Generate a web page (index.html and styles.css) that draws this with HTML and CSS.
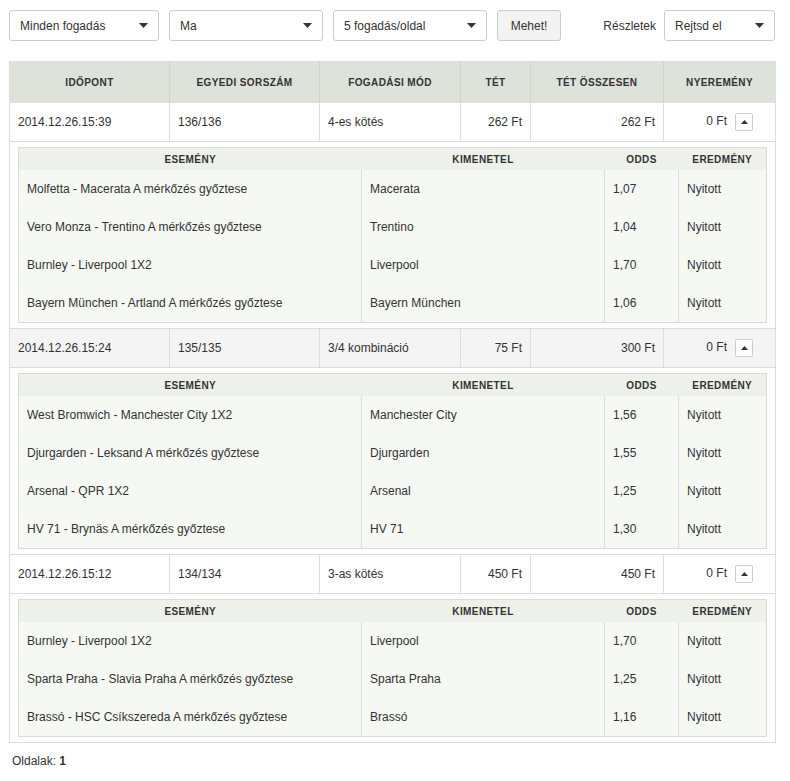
FILE: index.html
```html
<!DOCTYPE html>
<html lang="hu">
<head>
    <meta charset="UTF-8">
    <title>Fogadásaim</title>
    <link rel="stylesheet" href="styles.css">
</head>
<body>
    <div class="page">
        <!-- szűrők -->
        <div class="toolbar">
            <div class="select w150">Minden fogadás<svg class="caret" width="9" height="5" viewBox="0 0 9 5"><path d="M0 0h9L4.5 5z"/></svg></div>
            <div class="select w154">Ma<svg class="caret" width="9" height="5" viewBox="0 0 9 5"><path d="M0 0h9L4.5 5z"/></svg></div>
            <div class="select w154">5 fogadás/oldal<svg class="caret" width="9" height="5" viewBox="0 0 9 5"><path d="M0 0h9L4.5 5z"/></svg></div>
            <button class="btn">Mehet!</button>
            <span class="label">Részletek</span>
            <div class="select w111">Rejtsd el<svg class="caret" width="9" height="5" viewBox="0 0 9 5"><path d="M0 0h9L4.5 5z"/></svg></div>
        </div>

        <table class="bets">
            <colgroup>
                <col style="width:160px"><col style="width:150px"><col style="width:141px">
                <col style="width:70px"><col style="width:133px"><col style="width:112px">
            </colgroup>
            <thead>
                <tr>
                    <th>Időpont</th><th>Egyedi sorszám</th><th>Fogadási mód</th>
                    <th>Tét</th><th>Tét összesen</th><th>Nyeremény</th>
                </tr>
            </thead>
            <tbody>
                <tr class="bet">
                    <td>2014.12.26.15:39</td><td>136/136</td><td>4-es kötés</td>
                    <td class="num">262 Ft</td><td class="num">262 Ft</td>
                    <td class="num win">0 Ft<span class="toggle"><svg width="7" height="4" viewBox="0 0 7 4"><path d="M0 4h7L3.5 0z"/></svg></span></td>
                </tr>
                <tr class="details">
                    <td colspan="6">
                        <table class="events">
                            <colgroup><col style="width:343px"><col style="width:243px"><col style="width:74px"><col style="width:88px"></colgroup>
                            <thead><tr><th>Esemény</th><th>Kimenetel</th><th>Odds</th><th>Eredmény</th></tr></thead>
                            <tbody>
                                <tr><td>Molfetta - Macerata A mérkőzés győztese</td><td>Macerata</td><td>1,07</td><td>Nyitott</td></tr>
                                <tr><td>Vero Monza - Trentino A mérkőzés győztese</td><td>Trentino</td><td>1,04</td><td>Nyitott</td></tr>
                                <tr><td>Burnley - Liverpool 1X2</td><td>Liverpool</td><td>1,70</td><td>Nyitott</td></tr>
                                <tr><td>Bayern München - Artland A mérkőzés győztese</td><td>Bayern München</td><td>1,06</td><td>Nyitott</td></tr>
                            </tbody>
                        </table>
                    </td>
                </tr>
                <tr class="bet alt">
                    <td>2014.12.26.15:24</td><td>135/135</td><td>3/4 kombináció</td>
                    <td class="num">75 Ft</td><td class="num">300 Ft</td>
                    <td class="num win">0 Ft<span class="toggle"><svg width="7" height="4" viewBox="0 0 7 4"><path d="M0 4h7L3.5 0z"/></svg></span></td>
                </tr>
                <tr class="details">
                    <td colspan="6">
                        <table class="events">
                            <colgroup><col style="width:343px"><col style="width:243px"><col style="width:74px"><col style="width:88px"></colgroup>
                            <thead><tr><th>Esemény</th><th>Kimenetel</th><th>Odds</th><th>Eredmény</th></tr></thead>
                            <tbody>
                                <tr><td>West Bromwich - Manchester City 1X2</td><td>Manchester City</td><td>1,56</td><td>Nyitott</td></tr>
                                <tr><td>Djurgarden - Leksand A mérkőzés győztese</td><td>Djurgarden</td><td>1,55</td><td>Nyitott</td></tr>
                                <tr><td>Arsenal - QPR 1X2</td><td>Arsenal</td><td>1,25</td><td>Nyitott</td></tr>
                                <tr><td>HV 71 - Brynäs A mérkőzés győztese</td><td>HV 71</td><td>1,30</td><td>Nyitott</td></tr>
                            </tbody>
                        </table>
                    </td>
                </tr>
                <tr class="bet">
                    <td>2014.12.26.15:12</td><td>134/134</td><td>3-as kötés</td>
                    <td class="num">450 Ft</td><td class="num">450 Ft</td>
                    <td class="num win">0 Ft<span class="toggle"><svg width="7" height="4" viewBox="0 0 7 4"><path d="M0 4h7L3.5 0z"/></svg></span></td>
                </tr>
                <tr class="details">
                    <td colspan="6">
                        <table class="events">
                            <colgroup><col style="width:343px"><col style="width:243px"><col style="width:74px"><col style="width:88px"></colgroup>
                            <thead><tr><th>Esemény</th><th>Kimenetel</th><th>Odds</th><th>Eredmény</th></tr></thead>
                            <tbody>
                                <tr><td>Burnley - Liverpool 1X2</td><td>Liverpool</td><td>1,70</td><td>Nyitott</td></tr>
                                <tr><td>Sparta Praha - Slavia Praha A mérkőzés győztese</td><td>Sparta Praha</td><td>1,25</td><td>Nyitott</td></tr>
                                <tr><td>Brassó - HSC Csíkszereda A mérkőzés győztese</td><td>Brassó</td><td>1,16</td><td>Nyitott</td></tr>
                            </tbody>
                        </table>
                    </td>
                </tr>
            </tbody>
        </table>

        <div class="pager">Oldalak: <b>1</b></div>
    </div>
</body>
</html>
```

FILE: styles.css
```css
body {
    margin: 0;
    background: #fff;
    color: #333;
    font-family: "Liberation Sans", Arial, sans-serif;
    font-size: 12px;
}
.page { padding: 10px 15px 0 9px; width: 766px; }

.toolbar {
    display: flex;
    align-items: center;
    height: 31px;
    margin-bottom: 20px;
}
.select {
    box-sizing: border-box;
    height: 31px;
    border: 1px solid #ccc;
    border-radius: 3px;
    background: #fff;
    padding: 0 10px;
    display: flex;
    align-items: center;
    justify-content: space-between;
    margin-right: 10px;
}
.select .caret { fill: #333; }
.w150 { width: 150px; }
.w154 { width: 154px; }
.w111 { width: 111px; margin-right: 0; }
.btn {
    box-sizing: border-box;
    height: 31px;
    width: 64px;
    border: 1px solid #ccc;
    border-radius: 3px;
    background: #f3f3f3;
    color: #333;
    font: inherit;
    padding: 0;
}
.label { margin-left: auto; margin-right: 8px; }

table { border-collapse: collapse; table-layout: fixed; }
.bets { width: 766px; border: 1px solid #ddd; }
.bets > thead th {
    height: 40px;
    padding: 0;
    background: #dde2da;
    border-left: 1px solid #d0d5cd;
    font-size: 10px;
    font-weight: bold;
    letter-spacing: 0.4px;
    text-transform: uppercase;
    text-align: center;
}
.bets > thead th:first-child { border-left: 0; }
.bet td {
    height: 38px;
    padding: 0 8px;
    border: 1px solid #ddd;
    white-space: nowrap;
}
.bet.alt td { background: #f4f4f4; }
.bet .num { text-align: right; }
.bet .win { padding-right: 22px; }
.toggle {
    display: inline-block;
    box-sizing: border-box;
    width: 18px;
    height: 18px;
    margin-left: 8px;
    border: 1px solid #ccc;
    border-radius: 2px;
    background: #fff;
    line-height: 14px;
    text-align: center;
    vertical-align: middle;
}
.toggle svg { fill: #333; vertical-align: middle; }
.details > td { padding: 5px 8px; border: 1px solid #ddd; background: #fff; }

.events { width: 100%; border: 1px solid #d8dcd4; background: #f6f8f3; }
.events th {
    height: 22px;
    padding: 0;
    background: #edf1e9;
    font-size: 10px;
    font-weight: bold;
    letter-spacing: 0.4px;
    text-transform: uppercase;
    text-align: center;
}
.events td {
    height: 38px;
    padding: 0 8px;
    border-left: 1px solid #ddd;
    white-space: nowrap;
}
.events td:first-child { border-left: 0; }

.pager { margin-top: 11px; padding-left: 3px; }
```
